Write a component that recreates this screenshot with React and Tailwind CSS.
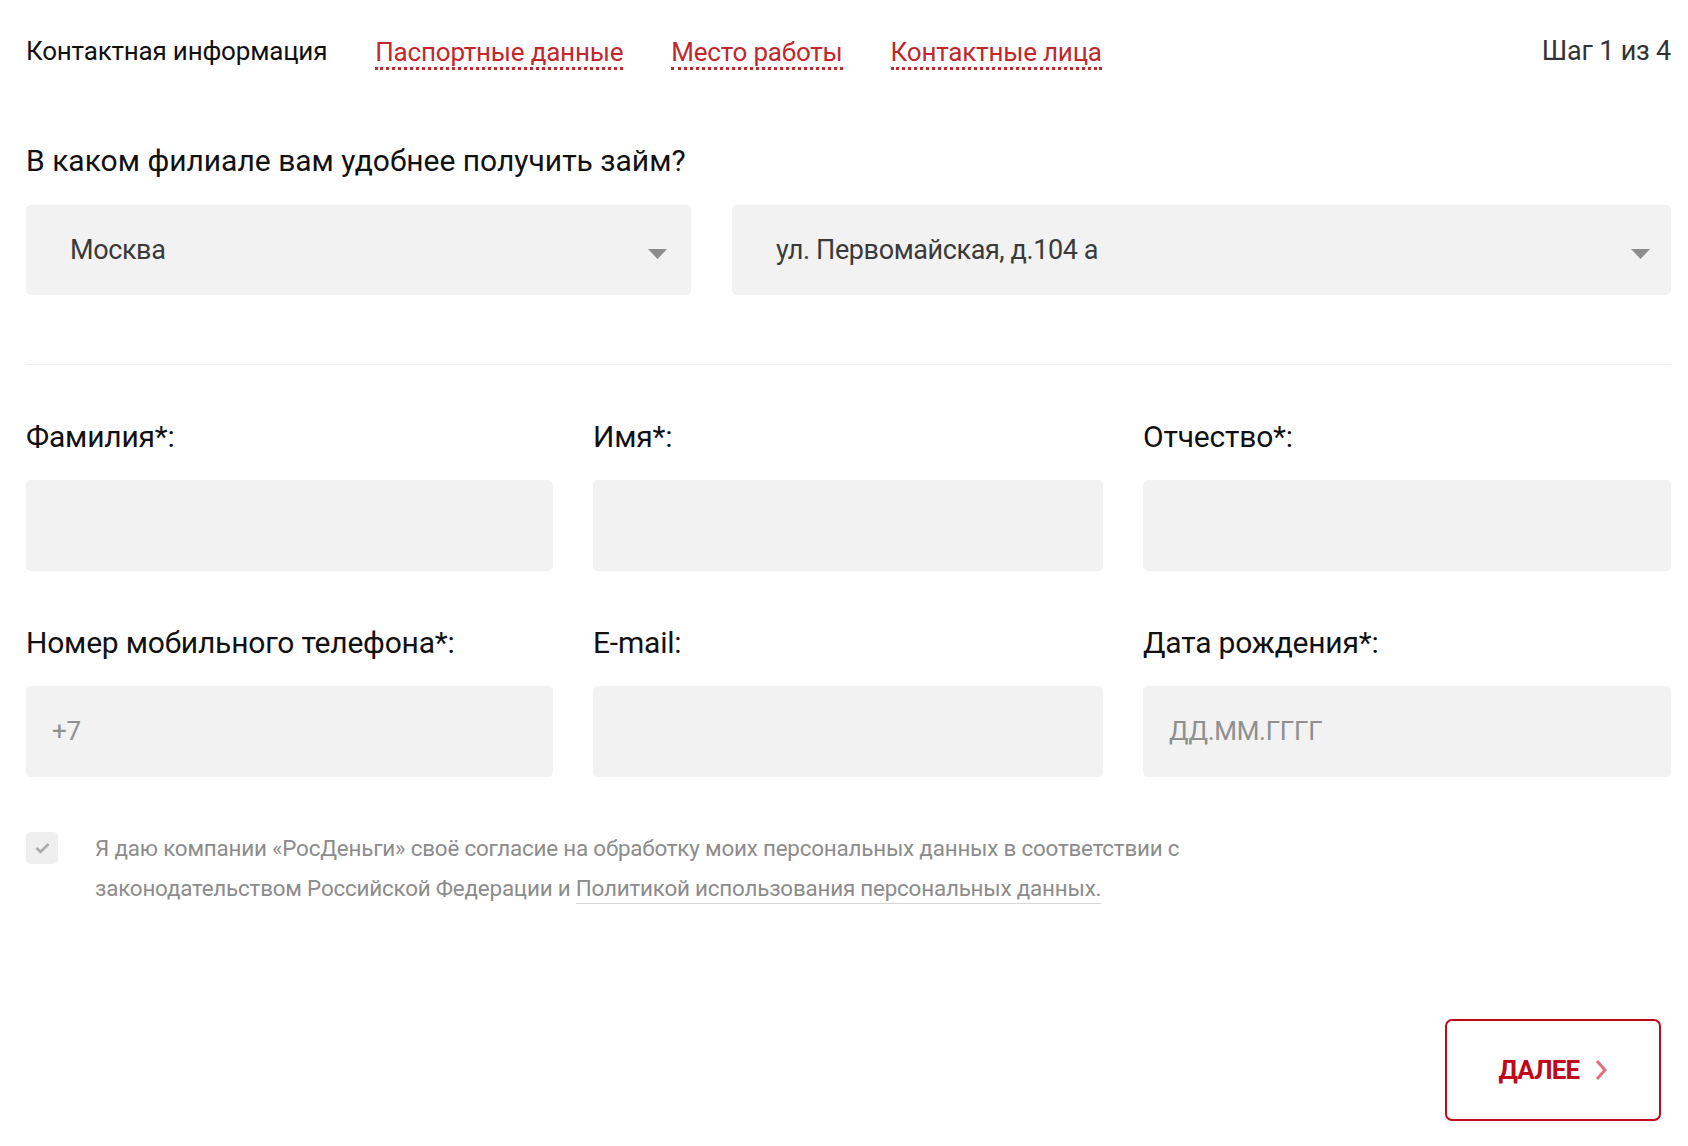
import React from 'react';

const font = { fontFamily: 'Roboto, "Noto Sans", sans-serif' };

function Caret() {
  return (
    <svg width="19" height="10" viewBox="0 0 19 10" className="shrink-0 mt-[8px]">
      <path d="M0 0 L19 0 L9.5 10 Z" fill="#8c8c8c" />
    </svg>
  );
}

function Select({ value, className }) {
  return (
    <div className={`h-[90px] bg-[#f2f2f2] rounded-[5px] flex items-center justify-between ${className}`}>
      <span className="text-[27px] text-[#3a3a3a] tracking-[-0.4px]">{value}</span>
      <Caret />
    </div>
  );
}

function Field({ label, placeholder }) {
  return (
    <div className="flex flex-col">
      <div className="h-[40px] leading-[40px] text-[30px] text-[#111] tracking-[-0.2px]">{label}</div>
      <div className="mt-[23px] h-[91px] bg-[#f2f2f2] rounded-[5px] flex items-center px-[26px]">
        {placeholder && <span className="text-[26px] text-[#8f8f8f] tracking-[-0.3px]">{placeholder}</span>}
      </div>
    </div>
  );
}

export default function App() {
  const tabs = ['Паспортные данные', 'Место работы', 'Контактные лица'];

  return (
    <div className="min-h-screen bg-white pl-[26px] pr-[17px]" style={font}>
      {/* Steps */}
      <div className="h-[102px] flex items-center">
        <span className="text-[26px] text-[#111] tracking-[-0.2px]">Контактная информация</span>
        {tabs.map((t) => (
          <span
            key={t}
            className="ml-[48px] text-[26px] text-[#c1272d] tracking-[-0.2px] border-b-[3px] border-dotted border-[#c1272d] leading-[30px] mt-[4px]"
          >
            {t}
          </span>
        ))}
        <span className="ml-auto text-[27px] text-[#333] tracking-[-0.2px]">Шаг 1 из 4</span>
      </div>

      {/* Branch */}
      <h2 className="mt-[39px] h-[40px] leading-[40px] text-[30px] font-normal text-[#111] tracking-[0px]">
        В каком филиале вам удобнее получить займ?
      </h2>
      <div className="mt-[24px] grid grid-cols-[665px_939px] gap-x-[41px]">
        <Select value="Москва" className="pl-[44px] pr-[24px]" />
        <Select value="ул. Первомайская, д.104 а" className="pl-[44px] pr-[21px]" />
      </div>

      <div className="mt-[69px] border-t border-[#eeeeee]" />

      {/* Personal fields */}
      <div className="mt-[52px] grid grid-cols-[527px_510px_528px] gap-x-[40px] gap-y-[52px]">
        <Field label="Фамилия*:" />
        <Field label="Имя*:" />
        <Field label="Отчество*:" />
        <Field label="Номер мобильного телефона*:" placeholder="+7" />
        <Field label="E-mail:" />
        <Field label="Дата рождения*:" placeholder="ДД.ММ.ГГГГ" />
      </div>

      {/* Consent */}
      <div className="mt-[51px] flex items-start">
        <div className="mt-[4px] w-[32px] h-[32px] rounded-[5px] bg-[#efefef] flex items-center justify-center shrink-0">
          <svg width="15" height="12" viewBox="0 0 15 12">
            <path d="M1.5 6 L5.5 10 L13.5 2" fill="none" stroke="#aaaaaa" strokeWidth="2.6" />
          </svg>
        </div>
        <p className="ml-[37px] w-[1120px] text-[22.4px] leading-[40px] text-[#8c8c8c] tracking-[-0.2px]">
          Я даю компании «РосДеньги» своё согласие на обработку моих персональных данных в соответствии с
          законодательством Российской Федерации и{' '}
          <span className="underline decoration-[#d6d6d6] underline-offset-[7px] decoration-1">
            Политикой использования персональных данных.
          </span>
        </p>
      </div>

      {/* Next */}
      <div className="mt-[111px] flex justify-end pr-[10px] pb-[25px]">
        <button className="w-[216px] h-[102px] border-2 border-[#c0071b] rounded-[7px] flex items-center justify-center gap-[16px]">
          <span className="text-[26px] font-bold text-[#c0071b] tracking-[-0.8px]">ДАЛЕЕ</span>
          <svg width="12" height="22" viewBox="0 0 12 22">
            <path d="M2 2 L10 11 L2 20" fill="none" stroke="#e0707a" strokeWidth="3" />
          </svg>
        </button>
      </div>
    </div>
  );
}
